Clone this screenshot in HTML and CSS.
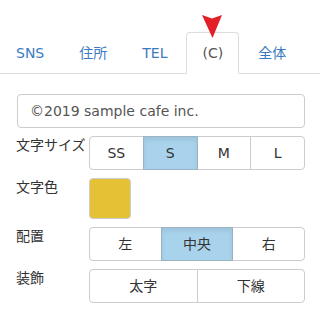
FILE: index.html
```html
<!DOCTYPE html>
<html lang="ja">
<head>
<meta charset="utf-8">
<link rel="stylesheet" href="styles.css">
</head>
<body>
<div class="page">
  <ul class="tabs">
    <li class="tab"><a>SNS</a></li>
    <li class="tab"><a>住所</a></li>
    <li class="tab"><a>TEL</a></li>
    <li class="tab active"><a>(C)</a></li>
    <li class="tab"><a>全体</a></li>
  </ul>
  <svg class="pointer" width="22" height="24" viewBox="0 0 22 24"><path d="M0 0 L10 3.5 L20 0 L10.5 23 Z" fill="#e32028"/></svg>
  <div class="content">
    <div class="input">©2019 sample cafe inc.</div>
    <div class="row">
      <div class="label">文字サイズ</div>
      <div class="group">
        <span class="btn">SS</span><span class="btn on">S</span><span class="btn">M</span><span class="btn">L</span>
      </div>
    </div>
    <div class="row">
      <div class="label">文字色</div>
      <div class="swatch"></div>
    </div>
    <div class="row">
      <div class="label">配置</div>
      <div class="group">
        <span class="btn">左</span><span class="btn on">中央</span><span class="btn">右</span>
      </div>
    </div>
    <div class="row">
      <div class="label">装飾</div>
      <div class="group">
        <span class="btn">太字</span><span class="btn">下線</span>
      </div>
    </div>
  </div>
</div>
</body>
</html>
```
FILE: styles.css
```css
* { box-sizing: border-box; }
html, body { margin: 0; padding: 0; background: #fff; }
body {
  font-family: "DejaVu Sans", "Noto Sans CJK JP", sans-serif;
  font-size: 14px;
  color: #333;
}
.page { position: relative; width: 320px; height: 314px; padding-top: 32px; }
.tabs {
  list-style: none;
  margin: 0;
  padding: 0;
  display: flex;
  gap: 3px;
  border-bottom: 1px solid #ddd;
}
.tab { margin-bottom: -1px; }
.tab a {
  display: block;
  padding: 10px 15px;
  line-height: 20px;
  border: 1px solid transparent;
  border-radius: 4px 4px 0 0;
  color: #3a7bc0;
}
.tab.active a {
  border-color: #ddd;
  border-bottom-color: #fff;
  background: #fff;
  color: #555;
}
.pointer { position: absolute; left: 202px; top: 15px; }
.content { padding: 20px 15px 0 16px; display: flex; flex-direction: column; gap: 8px; }
.input {
  margin-left: 1px;
  height: 34px;
  padding: 6px 12px;
  line-height: 20px;
  border: 1px solid #ccc;
  border-radius: 4px;
  color: #555;
}
.row { display: flex; align-items: flex-start; }
.label { width: 73px; line-height: 18px; flex: none; }
.group { flex: 1; display: flex; }
.btn {
  flex: 1 1 0;
  height: 34px;
  line-height: 20px;
  padding: 6px 0;
  text-align: center;
  border: 1px solid #ccc;
  background: #fff;
  margin-left: -1px;
  color: #333;
}
.btn:first-child { margin-left: 0; border-radius: 4px 0 0 4px; }
.btn:last-child { border-radius: 0 4px 4px 0; }
.btn.on {
  background: #a9d3ec;
  border-color: #9ab4c4;
  box-shadow: inset 0 3px 5px rgba(0,0,0,0.08);
  position: relative;
}
.swatch {
  width: 42px;
  height: 41px;
  background: #e5c135;
  border: 1px solid #ccc;
  border-radius: 4px;
}
```
